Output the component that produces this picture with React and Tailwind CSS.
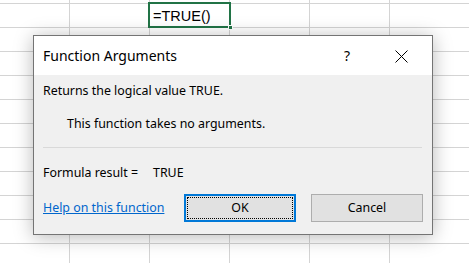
import React from "react";

const cols = [70, 80, 80, 80, 80, 80];
const rows = [4, 24, 24, 24, 24, 24, 24, 24, 24, 24, 24, 24];

function Grid() {
  return (
    <div className="grid grid-cols-[70px_80px_80px_80px_80px_80px] grid-rows-[4px_repeat(11,24px)]">
      {rows.map((r, ri) =>
        cols.map((c, ci) => {
          const isSel = ri === 1 && ci === 2;
          return (
            <div
              key={ri + "-" + ci}
              className="relative border-r border-b border-[#d4d4d4] bg-white"
            >
              {isSel && (
                <div className="absolute left-[-2px] top-[-2px] w-[83px] h-[26px] border-2 border-[#217346] z-10">
                  <span className="absolute left-[3px] top-[2px] text-[14.5px] leading-[20px] text-black font-['Liberation_Sans',sans-serif]">
                    =TRUE()
                  </span>
                  <div className="absolute right-[-4px] bottom-[-4px] w-[5px] h-[5px] bg-[#217346] border border-white" />
                </div>
              )}
            </div>
          );
        })
      )}
    </div>
  );
}

export default function App() {
  return (
    <div className="relative w-[469px] h-[263px] overflow-hidden bg-white font-['Segoe_UI','Noto_Sans',sans-serif]">
      <Grid />
      <div className="absolute left-[33px] top-[35px] w-[400px] h-[200px] border border-[#747474] bg-[#f0f0f0] shadow-[0_2px_18px_rgba(0,0,0,0.28)] flex flex-col z-20">
        <div className="h-[39px] bg-white flex items-center pl-[9px] pr-[24px] shrink-0">
          <span className="text-[14px] text-black flex-1">Function Arguments</span>
          <span className="text-[14px] text-black mr-[45px]">?</span>
          <svg width="13" height="13" viewBox="0 0 13 13" className="mt-[1px]">
            <path d="M0.5 0.5 L12.5 12.5 M12.5 0.5 L0.5 12.5" stroke="#000" strokeWidth="1" fill="none" />
          </svg>
        </div>
        <div className="flex flex-col flex-1 px-[9px] text-[12.4px] text-black leading-[16px]">
          <div className="mt-[8px]">Returns the logical value TRUE.</div>
          <div className="mt-[17px] pl-[24px]">This function takes no arguments.</div>
          <div className="mt-[15px] h-px bg-[#d9d9d9] mr-[1px]" />
          <div className="mt-[17px] flex">
            <span className="w-[110px]">Formula result =</span>
            <span>TRUE</span>
          </div>
          <div className="mt-[13px] flex items-center">
            <a className="text-[#0066cc] underline flex-1" href="#">Help on this function</a>
            <button className="w-[112px] h-[28px] border-2 border-[#0078d7] bg-[#e1e1e1] p-[1px] mr-[15px]">
              <div className="w-full h-full border border-dotted border-black flex items-center justify-center text-[12.4px]">
                OK
              </div>
            </button>
            <button className="w-[112px] h-[28px] border border-[#adadad] bg-[#e1e1e1] flex items-center justify-center text-[12.4px]">
              Cancel
            </button>
          </div>
        </div>
      </div>
    </div>
  );
}
